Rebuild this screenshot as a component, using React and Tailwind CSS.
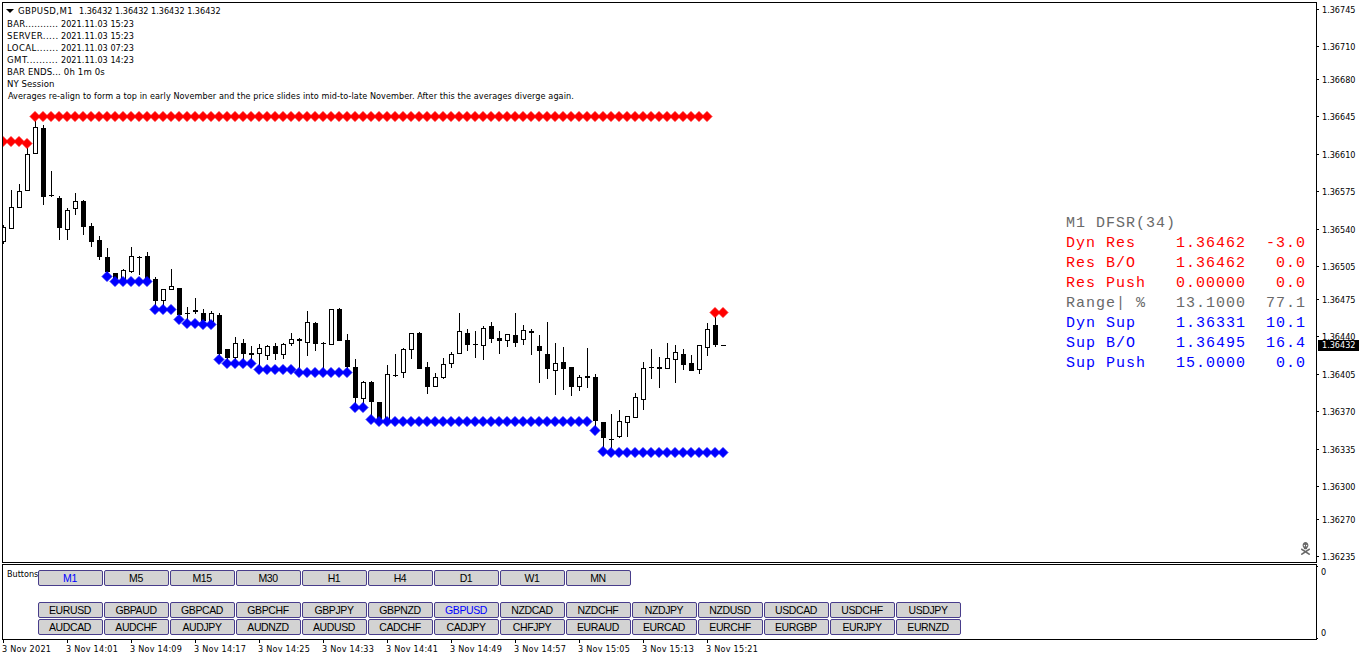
import { FaSkullCrossbones } from "react-icons/fa6";

// [x, high, bodyTop, bodyBottom, low, filled]
const candles = [
    [3, 225, 227, 241, 243, 0], [11, 190, 207, 228, 228, 0], [19, 184, 191, 207, 207, 0], [27, 148, 154, 190, 190, 0],
    [35, 121, 127, 153, 153, 0], [43, 125, 128, 196, 204, 1], [51, 171, 195, 195, 196, 1], [59, 196, 198, 227, 239, 1],
    [67, 208, 210, 229, 239, 0], [75, 193, 201, 208, 214, 0], [83, 200, 201, 226, 234, 1], [91, 223, 226, 241, 246, 1],
    [99, 236, 240, 256, 259, 1], [107, 248, 257, 271, 275, 1], [115, 273, 273, 278, 278, 1], [123, 269, 270, 280, 280, 0],
    [131, 247, 256, 271, 272, 0], [139, 256, 257, 257, 274, 1], [147, 252, 256, 280, 280, 1], [155, 277, 279, 300, 305, 1],
    [163, 289, 289, 300, 305, 0], [171, 269, 286, 289, 289, 0], [179, 288, 288, 314, 316, 1], [187, 307, 313, 313, 320, 1],
    [195, 298, 310, 311, 313, 1], [203, 309, 313, 320, 320, 1], [211, 311, 313, 321, 321, 0], [219, 313, 315, 353, 356, 1],
    [227, 349, 349, 357, 360, 1], [235, 337, 343, 357, 360, 0], [243, 339, 343, 353, 360, 1], [251, 346, 353, 354, 360, 1],
    [259, 344, 348, 353, 365, 0], [267, 345, 346, 355, 359, 0], [275, 343, 346, 353, 359, 1], [283, 343, 344, 354, 358, 0],
    [291, 333, 339, 343, 345, 0], [299, 338, 339, 340, 367, 1], [307, 311, 322, 342, 355, 0], [315, 322, 323, 343, 350, 1],
    [323, 342, 343, 343, 368, 1], [331, 309, 309, 344, 344, 0], [339, 308, 309, 340, 340, 1], [347, 334, 340, 366, 369, 1],
    [355, 359, 367, 397, 403, 1], [363, 381, 382, 398, 403, 0], [371, 381, 382, 401, 415, 1], [379, 402, 402, 418, 418, 1],
    [387, 365, 374, 419, 419, 0], [395, 354, 375, 375, 376, 1], [403, 348, 349, 372, 377, 0], [411, 333, 333, 349, 358, 0],
    [419, 332, 333, 368, 368, 1], [427, 362, 367, 386, 393, 1], [435, 373, 377, 386, 386, 0], [443, 358, 364, 377, 378, 0],
    [451, 352, 354, 363, 367, 0], [459, 313, 331, 353, 353, 0], [467, 329, 333, 344, 350, 1], [475, 331, 344, 344, 357, 1],
    [483, 326, 328, 345, 359, 0], [491, 322, 326, 338, 342, 1], [499, 331, 338, 340, 353, 1], [507, 334, 334, 340, 346, 0],
    [515, 313, 335, 342, 346, 1], [523, 325, 330, 339, 344, 0], [531, 329, 331, 332, 354, 1], [539, 335, 346, 350, 382, 1],
    [547, 322, 354, 368, 378, 1], [555, 343, 363, 370, 394, 0], [563, 347, 362, 368, 389, 1], [571, 367, 367, 386, 395, 1],
    [579, 375, 377, 386, 390, 0], [587, 348, 376, 377, 387, 1], [595, 374, 377, 420, 426, 1], [603, 422, 422, 437, 447, 1],
    [611, 414, 439, 439, 447, 1], [619, 410, 421, 436, 437, 0], [627, 416, 416, 422, 436, 0], [635, 393, 397, 417, 417, 0],
    [643, 362, 368, 399, 409, 0], [651, 349, 367, 367, 378, 1], [659, 357, 367, 368, 387, 1], [667, 343, 358, 368, 368, 0],
    [675, 345, 352, 359, 382, 0], [683, 349, 354, 364, 369, 1], [691, 355, 363, 370, 370, 1], [699, 345, 345, 369, 373, 0],
    [707, 323, 329, 347, 355, 0], [715, 317, 325, 344, 346, 1], [723, 345, 345, 345, 345, 1],
];

// [firstX, lastX, y]
const resistance = [[3, 19, 141.5], [27, 27, 143.5], [35, 707, 116.5], [715, 723, 312.5]];
const support = [
    [107, 107, 276.5], [115, 147, 281.5], [155, 171, 309.5], [179, 179, 319.5], [187, 195, 323.5], [203, 211, 324.5],
    [219, 219, 359.5], [227, 251, 363.5], [259, 291, 369.5], [299, 347, 372.5], [355, 363, 407.5], [371, 371, 419.5],
    [379, 587, 421.5], [595, 595, 430.5], [603, 603, 451.5], [611, 723, 452.5],
];

const prices = [
    ["1.36745", 9], ["1.36710", 46], ["1.36680", 79], ["1.36645", 116], ["1.36610", 154], ["1.36575", 191],
    ["1.36540", 229], ["1.36505", 266], ["1.36475", 299], ["1.36440", 336], ["1.36405", 374], ["1.36370", 411],
    ["1.36335", 449], ["1.36300", 486], ["1.36270", 519], ["1.36235", 556],
];

const times = ["2021", "14:01", "14:09", "14:17", "14:25", "14:33", "14:41", "14:49", "14:57", "15:05", "15:13", "15:21"];

const comments = [
    ["BAR...........", "2021.11.03 15:23", "tracking-[0.3px]"],
    ["SERVER.....", "2021.11.03 15:23", "tracking-[0.45px]"],
    ["LOCAL.......", "2021.11.03 07:23", "tracking-[0.4px]"],
    ["GMT..........", "2021.11.03 14:23", "tracking-[0.46px]"],
];

const stats = [
    ["Dyn Res", "1.36462", "-3.0", "text-[#ff0000]"],
    ["Res B/O", "1.36462", "0.0", "text-[#ff0000]"],
    ["Res Push", "0.00000", "0.0", "text-[#ff0000]"],
    ["Range| %", "13.1000", "77.1", "text-[#696969]"],
    ["Dyn Sup", "1.36331", "10.1", "text-[#0000ff]"],
    ["Sup B/O", "1.36495", "16.4", "text-[#0000ff]"],
    ["Sup Push", "15.0000", "0.0", "text-[#0000ff]"],
];

const timeframes = ["M1", "M5", "M15", "M30", "H1", "H4", "D1", "W1", "MN"];
const pairsTop = ["EURUSD", "GBPAUD", "GBPCAD", "GBPCHF", "GBPJPY", "GBPNZD", "GBPUSD", "NZDCAD", "NZDCHF", "NZDJPY", "NZDUSD", "USDCAD", "USDCHF", "USDJPY"];
const pairsBottom = ["AUDCAD", "AUDCHF", "AUDJPY", "AUDNZD", "AUDUSD", "CADCHF", "CADJPY", "CHFJPY", "EURAUD", "EURCAD", "EURCHF", "EURGBP", "EURJPY", "EURNZD"];

const Candle = ({ data }) => {
    const [x, high, top, bottom, low, filled] = data;
    return (
        <g>
            <rect x={x} y={high} width="1" height={low - high + 1} fill="#000" />
            {filled ? (
                <rect x={x - 2} y={top} width="5" height={bottom - top + 1} fill="#000" />
            ) : (
                <rect x={x - 1.5} y={top + 0.5} width="4" height={bottom - top} fill="#fff" stroke="#000" />
            )}
        </g>
    );
};

const Diamonds = ({ levels, color }) => (
    <g fill={color} stroke={color} strokeWidth="0.8" strokeLinejoin="round" shapeRendering="auto">
        {levels.flatMap(([from, to, y]) => {
            const marks = [];
            for (let x = from; x <= to; x += 8) {
                marks.push(<path key={x} d={`M${x - 5} ${y}l5 -5l5 5l-5 5z`} />);
            }
            return marks;
        })}
    </g>
);

const Chart = () => (
    <svg className="absolute inset-0" width="1313" height="559" viewBox="3 3 1313 559" shapeRendering="crispEdges">
        {candles.map((c) => <Candle key={c[0]} data={c} />)}
        <Diamonds levels={resistance} color="#ff0000" />
        <Diamonds levels={support} color="#0000ff" />
    </svg>
);

const ButtonRow = ({ items, active }) => (
    <div className="flex flex-row gap-px">
        {items.map((item) => (
            <button key={item} className={`flex h-4 w-[65px] items-center justify-center rounded-[2px] border border-[#483d8b] bg-[#d3d3d3] pr-px font-['Liberation_Sans',sans-serif] text-[10.5px] leading-none tracking-[-0.4px] ${item === active ? "text-[#0000ff]" : "text-black"}`}>
                {item}
            </button>
        ))}
    </div>
);

const App = () => {
    return (
        <div className="flex h-[660px] w-[1362px] flex-col overflow-hidden bg-white pt-[2px] pl-[2px] font-['DejaVu_Sans_Condensed','DejaVu_Sans',sans-serif] text-[9px] leading-[12px] font-normal text-black [font-stretch:condensed]">
            <div className="flex flex-row">
                <div className="relative h-[561px] w-[1315px] shrink-0 overflow-hidden border border-black">
                    <Chart />
                    <div className="relative flex h-full flex-row justify-between">
                        <div className="flex flex-col pt-[2px] pl-[4px] whitespace-pre">
                            <div className="mb-px flex flex-row items-center">
                                <svg width="8" height="4" viewBox="0 0 8 4" className="mr-[4px] -ml-px"><path d="M0 0h8L4 4z" /></svg>
                                <span className="w-[61px] text-[9.5px] tracking-[0.4px]">GBPUSD,M1</span>
                                <span>1.36432 1.36432 1.36432 1.36432</span>
                            </div>
                            {comments.map(([label, value, tracking]) => (
                                <div key={label} className="flex h-3 w-[127px] flex-row justify-between">
                                    <span className={`text-[9.5px] ${tracking}`}>{label}</span>
                                    <span className="tracking-[0.05px]">{value}</span>
                                </div>
                            ))}
                            <span className="text-[9.5px] tracking-[0.15px]">BAR ENDS... 0h 1m 0s</span>
                            <span className="text-[9.5px] tracking-[0.05px]">NY Session</span>
                            <span className="pl-px tracking-[0.092px]">Averages re-align to form a top in early November and the price slides into mid-to-late November. After this the averages diverge again.</span>
                        </div>
                        <div className="flex flex-col justify-between pt-[211px] pr-[10px]">
                            <div className="flex flex-col font-['Liberation_Mono',monospace] text-[15px] leading-5 tracking-[1px]">
                                <span className="text-[#696969]">M1 DFSR(34)</span>
                                {stats.map(([label, level, value, color]) => (
                                    <div key={label} className={`flex flex-row ${color}`}>
                                        <span className="w-[110px]">{label}</span>
                                        <span className="w-[80px]">{level}</span>
                                        <span className="w-[50px] text-right">{value}</span>
                                    </div>
                                ))}
                            </div>
                            <FaSkullCrossbones className="mr-[-4px] mb-[7px] h-[13px] w-[9px] self-end text-[#696969]" preserveAspectRatio="none" />
                        </div>
                    </div>
                </div>
                <div className="relative flex flex-col pt-[2px]">
                    {prices.map(([price, y], i) => (
                        <div key={price} className="flex flex-row items-start" style={{ height: i < prices.length - 1 ? prices[i + 1][1] - y : 12 }}>
                            <div className="mt-[5px] h-px w-[2px] bg-black" />
                            <span className="ml-[3px]">{price}</span>
                        </div>
                    ))}
                    <div className="absolute top-[338px] left-px h-[11px] w-[41px] bg-black pl-[4px] leading-[11px] text-white">1.36432</div>
                </div>
            </div>
            <div className="mt-px flex flex-row">
                <div className="flex h-[76px] w-[1315px] shrink-0 flex-row border border-black pl-[4px]">
                    <span className="w-[31px] pt-[3px]">Buttons</span>
                    <div className="flex flex-col pt-[5px]">
                        <ButtonRow items={timeframes} active="M1" />
                        <div className="mt-4 flex flex-col gap-px">
                            <ButtonRow items={pairsTop} active="GBPUSD" />
                            <ButtonRow items={pairsBottom} />
                        </div>
                    </div>
                </div>
                <div className="flex flex-col justify-between py-px">
                    <div className="flex flex-row items-start">
                        <div className="mt-px h-px w-px bg-black" />
                        <span className="mt-px ml-[3px]">0</span>
                    </div>
                    <div className="flex flex-row items-end">
                        <div className="h-px w-px bg-black" />
                        <span className="ml-[3px]">0</span>
                    </div>
                </div>
            </div>
            <div className="flex flex-row pl-px">
                {times.map((time) => (
                    <div key={time} className="flex w-16 flex-col">
                        <div className="h-[3px] w-px bg-black" />
                        <span className="-ml-px tracking-[0.25px] whitespace-nowrap">3 Nov {time}</span>
                    </div>
                ))}
            </div>
        </div>
    );
};

export default App;
